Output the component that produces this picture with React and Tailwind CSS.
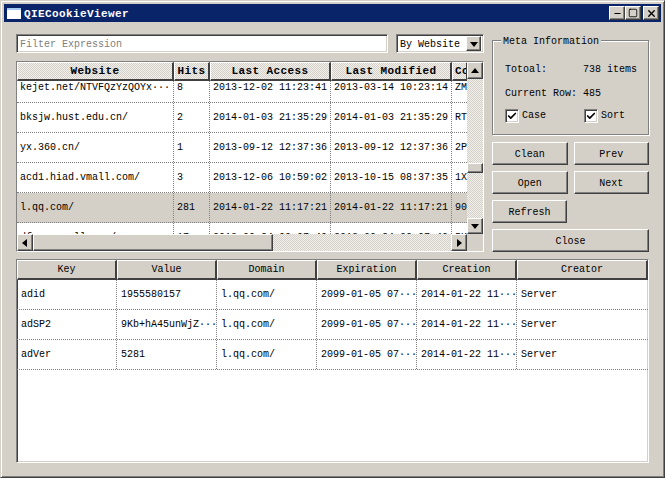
import { Check, Minus, Square, X } from "lucide-react";

const raised = "border border-t-white border-l-white border-r-[#404040] border-b-[#404040] shadow-[inset_-1px_-1px_0_#808080]";
const sunken = "border border-t-[#808080] border-l-[#808080] border-r-white border-b-white shadow-[inset_1px_1px_0_#404040,inset_-1px_-1px_0_#d4d0c8]";
const dither = "bg-[repeating-conic-gradient(#d4d0c8_0_25%,#f2f0ec_0_50%)] bg-[length:2px_2px]";

const sites = [
  ["kejet.net/NTVFQzYzQOYx···", "8", "2013-12-02 11:23:41", "2013-03-14 10:23:14", "ZM"],
  ["bksjw.hust.edu.cn/", "2", "2014-01-03 21:35:29", "2014-01-03 21:35:29", "RT"],
  ["yx.360.cn/", "1", "2013-09-12 12:37:36", "2013-09-12 12:37:36", "2P"],
  ["acd1.hiad.vmall.com/", "3", "2013-12-06 10:59:02", "2013-10-15 08:37:35", "1X"],
  ["l.qq.com/", "281", "2014-01-22 11:17:21", "2014-01-22 11:17:21", "90"],
  ["dfgss.vmall.com/", "17", "2013-09-24 09:07:40", "2013-09-24 09:07:40", "5K"],
];

const cookies = [
  ["adid", "1955580157", "l.qq.com/", "2099-01-05 07···", "2014-01-22 11···", "Server"],
  ["adSP2", "9Kb+hA45unWjZ···", "l.qq.com/", "2099-01-05 07···", "2014-01-22 11···", "Server"],
  ["adVer", "5281", "l.qq.com/", "2099-01-05 07···", "2014-01-22 11···", "Server"],
];

const siteHeaders = ["Website", "Hits", "Last Access", "Last Modified", "Co"];
const siteCols = "grid grid-cols-[157px_36px_121px_121px_16px]";
const cookieHeaders = ["Key", "Value", "Domain", "Expiration", "Creation", "Creator"];
const cookieCols = "grid grid-cols-[100px_100px_100px_100px_100px_131px]";

function Arrow({ dir }) {
  const points = {
    up: "4,1 8,6 0,6",
    down: "0,2 8,2 4,7",
    left: "6,0 6,8 1,4",
    right: "2,0 2,8 7,4",
  };
  return (
    <svg width="8" height="8" viewBox="0 0 8 8">
      <polygon points={points[dir]} fill="#000" />
    </svg>
  );
}

function ScrollButton({ dir, className = "" }) {
  return (
    <div className={`bg-[#d4d0c8] flex items-center justify-center ${raised} ${className}`}>
      <Arrow dir={dir} />
    </div>
  );
}

function Button({ children, className = "" }) {
  return (
    <div className={`bg-[#d4d0c8] flex items-center justify-center pt-[2px] ${raised} ${className}`}>
      {children}
    </div>
  );
}

function CheckBox({ label, className = "" }) {
  return (
    <div className={`flex items-center gap-[3px] ${className}`}>
      <div className={`w-[14px] h-[14px] bg-white flex items-center justify-center ${sunken}`}>
        <Check size={10} strokeWidth={4} color="#000" />
      </div>
      <span>{label}</span>
    </div>
  );
}

function TitleButton({ children, className = "" }) {
  return (
    <div className={`w-[16px] h-[14px] bg-[#d4d0c8] flex items-center justify-center ${raised} ${className}`}>
      {children}
    </div>
  );
}

function SiteTable() {
  return (
    <div className={`h-[191px] flex flex-col bg-white relative overflow-hidden ${sunken}`}>
      <div className="flex flex-1 min-h-0">
        <div className="w-[451px] flex flex-col min-h-0 overflow-hidden">
          <div className={`h-[19px] shrink-0 z-10 ${siteCols} ${dither}`}>
            {siteHeaders.map((h) => (
              <div
                key={h}
                className={`flex items-center pt-px font-bold text-[11px] tracking-[0.4px] border-r-2 border-b-2 border-r-[#404040] border-b-[#404040] border-t border-t-white border-l border-l-white overflow-hidden whitespace-nowrap ${h === "Co" ? "justify-start pl-[2px]" : "justify-center"}`}
              >
                {h}
              </div>
            ))}
          </div>
          <div className="flex-1 min-h-0 overflow-hidden">
            <div className="-mt-[8px]">
              {sites.map((row) => (
                <div
                  key={row[0]}
                  className={`h-[30px] border-b border-dotted border-b-[#808080] ${siteCols} ${row[0] === "l.qq.com/" ? "bg-[#d4d0c8]" : "bg-white"}`}
                >
                  {row.map((cell, i) => (
                    <div key={i} className="flex items-center pl-[3px] border-r border-dotted border-r-[#808080] overflow-hidden whitespace-nowrap">
                      {cell}
                    </div>
                  ))}
                </div>
              ))}
            </div>
          </div>
          <div className="h-[17px] shrink-0 flex bg-white">
            <ScrollButton dir="left" className="w-[16px]" />
            <div className={`w-[240px] ${raised} bg-[#d4d0c8]`} />
            <div className={`flex-1 ${dither}`} />
            <ScrollButton dir="right" className="w-[16px]" />
          </div>
        </div>
        <div className="w-[16px] flex flex-col bg-[#d4d0c8]">
          <div className={`flex-1 flex flex-col ${dither}`}>
            <ScrollButton dir="up" className="h-[17px]" />
            <div className={`h-[10px] mt-[84px] bg-[#d4d0c8] ${raised}`} />
            <div className="flex-1" />
            <ScrollButton dir="down" className="h-[16px]" />
          </div>
          <div className="h-[17px]" />
        </div>
      </div>
    </div>
  );
}

function CookieTable() {
  return (
    <div className={`h-[204px] bg-white ${sunken}`}>
      <div className={`h-[20px] bg-[#d4d0c8] ${cookieCols}`}>
        {cookieHeaders.map((h) => (
          <div key={h} className="flex items-center justify-center pt-px border-r-2 border-b-2 border-r-[#404040] border-b-[#404040] border-t border-t-white border-l border-l-white">
            {h}
          </div>
        ))}
      </div>
      {cookies.map((row) => (
        <div key={row[0]} className={`h-[30px] border-b border-dotted border-b-[#808080] ${cookieCols}`}>
          {row.map((cell, i) => (
            <div key={i} className="flex items-center pl-[4px] border-r border-dotted border-r-[#808080] overflow-hidden whitespace-nowrap last:border-r-0">
              {cell}
            </div>
          ))}
        </div>
      ))}
    </div>
  );
}

export default function App() {
  return (
    <div className="w-[665px] h-[478px] flex flex-col bg-[#d4d0c8] text-black text-[10px] leading-none font-['Liberation_Mono',monospace] p-[3px] border border-t-[#d4d0c8] border-l-[#d4d0c8] border-r-[#404040] border-b-[#404040] shadow-[inset_1px_1px_0_#fff,inset_-1px_-1px_0_#808080] overflow-hidden">
      <div className="h-[18px] shrink-0 bg-[#0a246a] flex items-center pl-[3px] pr-[2px]">
        <div className="w-[14px] h-[11px] bg-white border-t-2 border-t-[#a6caf0] mr-[3px]" />
        <span className="text-white font-bold text-[11px] tracking-[0.4px] pt-[2px]">QIECookieViewer</span>
        <div className="ml-auto flex items-center">
          <TitleButton><Minus size={9} strokeWidth={3} color="#000" /></TitleButton>
          <TitleButton><Square size={10} strokeWidth={2} color="#000" /></TitleButton>
          <TitleButton className="ml-[2px]"><X size={11} strokeWidth={3} color="#000" /></TitleButton>
        </div>
      </div>

      <div className="flex-1 flex flex-col px-[12px] pt-[12px]">
        <div className="flex gap-[8px]">
          <div className="w-[468px] flex flex-col gap-[8px]">
            <div className="flex gap-[8px]">
              <div className={`w-[372px] h-[19px] bg-white flex items-center pl-[3px] pt-[2px] text-[#808080] ${sunken}`}>
                Filter Expression
              </div>
              <div className={`flex-1 h-[19px] bg-white flex items-center pl-[3px] pr-[2px] ${sunken}`}>
                <span className="pt-[2px]">By Website</span>
                <ScrollButton dir="down" className="ml-auto w-[15px] h-[15px]" />
              </div>
            </div>
            <SiteTable />
          </div>

          <div className="w-[157px] flex flex-col pt-[6px]">
            <div className="relative h-[95px] border border-[#808080] shadow-[inset_1px_1px_0_#fff,1px_1px_0_#fff] pl-[12px] pt-[24px]">
              <span className="absolute -top-[4px] left-[8px] px-[2px] bg-[#d4d0c8]">Meta Information</span>
              <div className="flex">
                <span className="w-[78px]">Totoal:</span>
                <span>738 items</span>
              </div>
              <div className="mt-[14px]">Current Row: 485</div>
              <div className="flex mt-[10px]">
                <CheckBox label="Case" className="w-[79px]" />
                <CheckBox label="Sort" />
              </div>
            </div>
            <div className="grid grid-cols-2 gap-x-[6px] mt-[7px] gap-y-[6px]">
              <Button className="h-[23px]">Clean</Button>
              <Button className="h-[23px]">Prev</Button>
              <Button className="h-[23px]">Open</Button>
              <Button className="h-[23px]">Next</Button>
              <Button className="h-[23px] w-[75px]">Refresh</Button>
            </div>
            <Button className="h-[23px] mt-[6px]">Close</Button>
          </div>
        </div>

        <div className="mt-[7px]">
          <CookieTable />
        </div>
      </div>
    </div>
  );
}
